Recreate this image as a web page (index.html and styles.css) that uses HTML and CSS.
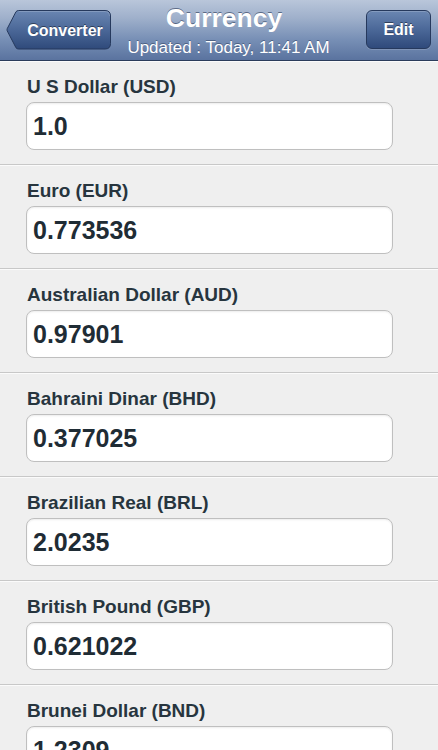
FILE: index.html
```html
<!DOCTYPE html>
<html lang="en">
<head>
<meta charset="utf-8">
<title>Currency</title>
<link rel="stylesheet" href="styles.css">
</head>
<body>
<div class="app">
  <header class="navbar">
    <div class="nav-left">
      <button class="back-btn" type="button">
        <svg class="back-shape" width="106" height="40" viewBox="0 0 106 40">
          <defs>
            <linearGradient id="bg1" x1="0" y1="0" x2="0" y2="1">
              <stop offset="0" stop-color="#6a86b2"/>
              <stop offset="0.5" stop-color="#4b6898"/>
              <stop offset="1" stop-color="#2f4a7b"/>
            </linearGradient>
          </defs>
          <path d="M12.5,0.5 H99 Q104.5,0.5 104.5,6 V33.5 Q104.5,39 99,39 H12.5 Q11,39 10,37.8 L1.2,20.8 Q0.8,19.75 1.2,18.7 L10,1.7 Q11,0.5 12.5,0.5 Z" fill="url(#bg1)" stroke="#26395d" stroke-width="1"/>
          <path d="M12.8,1.5 H99 Q103.5,1.5 103.5,6" fill="none" stroke="rgba(255,255,255,0.18)" stroke-width="1"/>
        </svg>
        <span class="btn-label back-label">Converter</span>
      </button>
    </div>
    <div class="nav-title">
      <div class="title">Currency</div>
      <div class="subtitle">Updated : Today, 11:41 AM</div>
    </div>
    <div class="nav-right">
      <button class="edit-btn" type="button"><span class="btn-label">Edit</span></button>
    </div>
  </header>

  <main class="list">
    <section class="row">
      <label class="cur-label">U S Dollar (USD)</label>
      <div class="cur-input">1.0</div>
    </section>
    <section class="row">
      <label class="cur-label">Euro (EUR)</label>
      <div class="cur-input">0.773536</div>
    </section>
    <section class="row">
      <label class="cur-label">Australian Dollar (AUD)</label>
      <div class="cur-input">0.97901</div>
    </section>
    <section class="row">
      <label class="cur-label">Bahraini Dinar (BHD)</label>
      <div class="cur-input">0.377025</div>
    </section>
    <section class="row">
      <label class="cur-label">Brazilian Real (BRL)</label>
      <div class="cur-input">2.0235</div>
    </section>
    <section class="row">
      <label class="cur-label">British Pound (GBP)</label>
      <div class="cur-input">0.621022</div>
    </section>
    <section class="row">
      <label class="cur-label">Brunei Dollar (BND)</label>
      <div class="cur-input">1.2309</div>
    </section>
  </main>
</div>
</body>
</html>
```

FILE: styles.css
```css
html, body {
  margin: 0;
  padding: 0;
  width: 438px;
  height: 750px;
  overflow: hidden;
  background: #efefef;
  font-family: "Liberation Sans", Arial, Helvetica, sans-serif;
}

.app {
  width: 438px;
  height: 750px;
  overflow: hidden;
  display: flex;
  flex-direction: column;
}

/* ---------- nav bar ---------- */
.navbar {
  flex: 0 0 auto;
  box-sizing: border-box;
  height: 61px;
  border-bottom: 1px solid #2b3c5b;
  background: linear-gradient(to bottom, #b9c6da 0%, #9fb0cb 30%, #7890b6 65%, #5a739f 100%);
  display: grid;
  grid-template-columns: 120px 1fr 120px;
  align-items: start;
}

.nav-left {
  padding: 10px 0 0 6px;
}

.nav-right {
  display: flex;
  justify-content: flex-end;
  padding: 10px 7px 0 0;
}

.back-btn,
.edit-btn {
  border: 0;
  padding: 0;
  margin: 0;
  background: none;
  font-family: inherit;
  cursor: pointer;
}

.back-btn {
  display: grid;
  width: 106px;
  height: 40px;
}

.back-shape,
.back-label {
  grid-area: 1 / 1;
}

.back-shape {
  display: block;
}

.btn-label {
  color: #ffffff;
  font-weight: bold;
  font-size: 16px;
  line-height: 39px;
  text-shadow: 0 -1px 0 rgba(0, 0, 0, 0.45);
}

.back-label {
  padding-left: 12px;
  text-align: center;
  align-self: center;
}

.edit-btn {
  width: 65px;
  height: 39px;
  box-sizing: border-box;
  border: 1px solid #26395d;
  border-radius: 6px;
  background: linear-gradient(to bottom, #6a86b2 0%, #4b6898 50%, #2f4a7b 100%);
  box-shadow: inset 0 1px 0 rgba(255, 255, 255, 0.18), 0 1px 0 rgba(255, 255, 255, 0.15);
  display: flex;
  align-items: center;
  justify-content: center;
}

.edit-btn .btn-label {
  line-height: 37px;
}

.nav-title {
  padding-top: 4px;
  text-align: center;
  color: #ffffff;
  white-space: nowrap;
  min-width: 0;
}

.title {
  font-size: 26.5px;
  line-height: 28px;
  font-weight: bold;
  padding-left: 10px;
  text-shadow: 0 -1px 0 rgba(40, 55, 85, 0.6);
}

.subtitle {
  margin: 6px -40px 0;
  font-size: 17px;
  line-height: 19px;
  padding-left: 19px;
  text-shadow: 0 -1px 0 rgba(40, 55, 85, 0.5);
}

/* ---------- list ---------- */
.list {
  flex: 1 1 auto;
  overflow: hidden;
}

.row {
  display: flex;
  flex-direction: column;
  padding: 15px 45px 14px 26px;
  border-top: 1px solid #fbfbfb;
  border-bottom: 1px solid #c8c8c8;
}

.cur-label {
  display: block;
  font-size: 19px;
  line-height: 20px;
  font-weight: bold;
  color: #27353e;
  padding-left: 1px;
}

.cur-input {
  margin-top: 5px;
  height: 48px;
  box-sizing: border-box;
  background: #ffffff;
  border: 1px solid #bfbfbf;
  border-radius: 8px;
  box-shadow: inset 0 1px 2px rgba(0, 0, 0, 0.08);
  padding: 0 0 0 6px;
  font-size: 25px;
  line-height: 46px;
  font-weight: bold;
  color: #1f2c35;
}
```
